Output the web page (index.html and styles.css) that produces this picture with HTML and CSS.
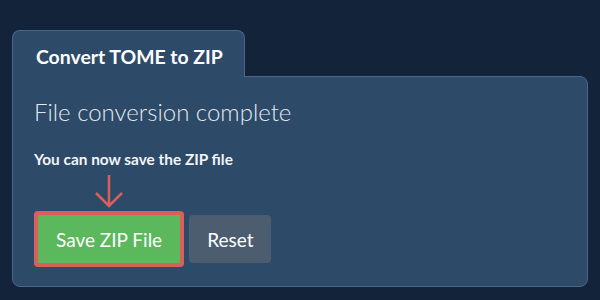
FILE: index.html
```html
<!DOCTYPE html>
<html>
<head>
    <title>Convert TOME to ZIP</title>
    <meta charset="UTF-8">
    <link rel="stylesheet" href="styles.css">
</head>
<body>
    <div class="wrap">
        <div class="tab">Convert TOME to ZIP</div>
        <div class="panel">
            <h2>File conversion complete</h2>
            <p class="note">You can now save the ZIP file</p>
            <div class="arrow">
                <svg width="30" height="34" viewBox="0 0 30 34">
                    <path d="M15 1 V32 M2 19 L15 32 L28 19" fill="none" stroke="#d9605a" stroke-width="2.5"/>
                </svg>
            </div>
            <div class="actions">
                <div class="highlight">
                    <button class="btn btn-save">Save ZIP File</button>
                </div>
                <button class="btn btn-reset">Reset</button>
            </div>
        </div>
    </div>
</body>
</html>
```

FILE: styles.css
```css
body {
    margin: 0;
    background-color: #12233a;
    font-family: Lato, "Open Sans", sans-serif;
    color: #fff;
}
.wrap {
    padding: 30px 12px 0 12px;
}
.tab {
    position: relative;
    z-index: 1;
    box-sizing: border-box;
    width: 233px;
    height: 47px;
    margin-bottom: -1px;
    padding: 14px 0 0 23px;
    background-color: #2d4a69;
    border: 1px solid #4b6788;
    border-bottom: none;
    border-radius: 8px 8px 0 0;
    font-size: 19.4px;
    font-weight: bold;
}
.panel {
    box-sizing: border-box;
    height: 211px;
    padding: 20px 21px 0 21px;
    background-color: #2d4a69;
    border: 1px solid #4b6788;
    border-radius: 0 8px 8px 8px;
}
h2 {
    margin: 0;
    font-size: 24px;
    font-weight: 300;
    color: #e3e8ef;
}
.note {
    margin: 24px 0 0 0;
    font-size: 15.4px;
    font-weight: bold;
    color: #f2f4f7;
}
.arrow {
    height: 35px;
    margin: 6px 0 0 60px;
}
.actions {
    display: flex;
    align-items: center;
    gap: 5px;
    margin-top: 2px;
}
.highlight {
    padding: 4px;
    background-color: #d9605a;
    border-radius: 4px;
}
.btn {
    height: 48px;
    padding: 0 18px;
    border: none;
    border-radius: 4px;
    font-family: Lato, "Open Sans", sans-serif;
    font-size: 19px;
    color: #fff;
    cursor: pointer;
}
.btn-save {
    display: block;
    background-color: #5cb85c;
    border-radius: 0;
}
.btn-reset {
    background-color: #4d5d70;
}
```
